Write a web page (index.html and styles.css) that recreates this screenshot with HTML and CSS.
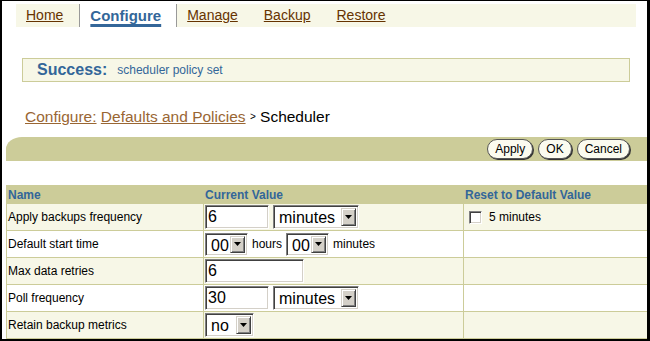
FILE: index.html
```html
<!DOCTYPE html>
<html lang="en">
<head>
  <meta charset="UTF-8" />
  <title>Scheduler</title>
  <link rel="stylesheet" href="styles.css">
</head>
<body>
  <div class="page">

    <!-- Tabs -->
    <nav class="tabs">
      <a class="tab" href="#">Home</a>
      <a class="tab tab-active" href="#">Configure</a>
      <a class="tab" href="#">Manage</a>
      <a class="tab" href="#">Backup</a>
      <a class="tab" href="#">Restore</a>
    </nav>

    <!-- Confirmation -->
    <div class="message">
      <span class="message-title">Success:</span>
      <span class="message-text">scheduler policy set</span>
    </div>

    <!-- Breadcrumbs -->
    <div class="crumbs">
      <a href="#">Configure:</a> <a href="#">Defaults and Policies</a>
      <span class="crumb-sep">&gt;</span> Scheduler
    </div>

    <!-- Action bar -->
    <div class="actions">
      <button class="btn">Apply</button>
      <button class="btn">OK</button>
      <button class="btn">Cancel</button>
    </div>

    <table class="settings">
      <colgroup>
        <col class="col-name">
        <col class="col-value">
        <col class="col-reset">
      </colgroup>
      <thead>
        <tr>
          <th>Name</th>
          <th>Current Value</th>
          <th>Reset to Default Value</th>
        </tr>
      </thead>
      <tbody>
        <tr>
          <td>Apply backups frequency</td>
          <td>
            <div class="controls">
              <input class="field field-short" type="text" value="6">
              <span class="select select-unit"><span class="select-value">minutes</span><span class="select-btn"><svg width="7" height="4" viewBox="0 0 7 4"><path d="M0 0h7L3.5 4z" fill="#000"/></svg></span></span>
            </div>
          </td>
          <td>
            <label class="reset"><input class="check" type="checkbox"> 5 minutes</label>
          </td>
        </tr>
        <tr>
          <td>Default start time</td>
          <td>
            <div class="controls">
              <span class="select select-time"><span class="select-value">00</span><span class="select-btn"><svg width="7" height="4" viewBox="0 0 7 4"><path d="M0 0h7L3.5 4z" fill="#000"/></svg></span></span>
              <span class="unit">hours</span>
              <span class="select select-time"><span class="select-value">00</span><span class="select-btn"><svg width="7" height="4" viewBox="0 0 7 4"><path d="M0 0h7L3.5 4z" fill="#000"/></svg></span></span>
              <span class="unit">minutes</span>
            </div>
          </td>
          <td></td>
        </tr>
        <tr>
          <td>Max data retries</td>
          <td>
            <div class="controls">
              <input class="field field-long" type="text" value="6">
            </div>
          </td>
          <td></td>
        </tr>
        <tr>
          <td>Poll frequency</td>
          <td>
            <div class="controls">
              <input class="field field-short" type="text" value="30">
              <span class="select select-unit"><span class="select-value">minutes</span><span class="select-btn"><svg width="7" height="4" viewBox="0 0 7 4"><path d="M0 0h7L3.5 4z" fill="#000"/></svg></span></span>
            </div>
          </td>
          <td></td>
        </tr>
        <tr>
          <td>Retain backup metrics</td>
          <td>
            <div class="controls">
              <span class="select select-bool"><span class="select-value">no</span><span class="select-btn"><svg width="7" height="4" viewBox="0 0 7 4"><path d="M0 0h7L3.5 4z" fill="#000"/></svg></span></span>
            </div>
          </td>
          <td></td>
        </tr>
      </tbody>
    </table>

  </div>
</body>
</html>
```

FILE: styles.css
```css
body {
  margin: 0;
  font-family: 'Liberation Sans', Arial, sans-serif;
  color: #000;
  background-color: #fff;
}

.page {
  width: 650px;
  height: 341px;
  box-sizing: border-box;
  border: solid #000;
  border-width: 1px 3px 2px 2px;
  overflow: hidden;
}

/* Tabs */
.tabs {
  display: flex;
  height: 23px;
  margin: 3px 11px 0 14px;
  background-color: #f7f7e7;
}

.tab {
  padding: 0 16px 0 10px;
  line-height: 23px;
  font-size: 14px;
  color: #663300;
}

.tab-active {
  padding: 0 15px 0 10px;
  background-color: #fff;
  border-left: 1px solid #999;
  border-right: 1px solid #999;
  font-size: 15px;
  font-weight: bold;
  color: #336699;
  text-decoration-thickness: 3px;
  text-underline-offset: 3px;
}

/* Success message */
.message {
  display: flex;
  align-items: center;
  gap: 10px;
  height: 24px;
  box-sizing: border-box;
  margin: 31px 17px 0 20px;
  padding-left: 14px;
  border: 1px solid #cccc99;
  background-color: #f7f7e7;
  color: #336699;
}

.message-title {
  font-size: 16px;
  font-weight: bold;
}

.message-text {
  font-size: 12px;
}

/* Breadcrumbs */
.crumbs {
  margin: 25px 0 0 23px;
  font-size: 15.5px;
  line-height: 20px;
}

.crumbs a {
  color: #996633;
}

.crumb-sep {
  font-size: 10px;
  vertical-align: 2px;
}

/* Action bar */
.actions {
  display: flex;
  justify-content: flex-end;
  align-items: center;
  gap: 5px;
  height: 24px;
  margin: 10px 0 0 4px;
  padding-right: 17px;
  background-color: #cccc99;
  border-top-left-radius: 16px 12px;
}

.btn {
  height: 20px;
  padding: 0 7px;
  font-family: 'Liberation Sans', Arial, sans-serif;
  font-size: 12px;
  color: #000;
  background-color: #fbfbef;
  border: 1px solid #555;
  border-radius: 10px;
  box-shadow: 1px 1px 0 #333;
  cursor: pointer;
}

/* Settings table */
.settings {
  width: 641px;
  margin: 24px 0 0 4px;
  border-collapse: collapse;
  table-layout: fixed;
  font-size: 12px;
}

.col-name { width: 197px; }
.col-value { width: 260px; }
.col-reset { width: 184px; }

.settings th {
  height: 17px;
  padding: 0 1px;
  text-align: left;
  color: #336699;
  background-color: #cccc99;
  border: 1px solid #cccc99;
}

.settings tbody tr {
  height: 27px;
}

.settings td {
  padding: 0 1px;
  border: 1px solid #cccc99;
  background-color: #fff;
}

.settings tbody tr:nth-child(odd) td {
  background-color: #f7f7e7;
}

.controls {
  display: flex;
  align-items: center;
  gap: 4px;
}

/* Classic form controls */
.field {
  height: 24px;
  box-sizing: border-box;
  margin: 0;
  padding: 0 2px;
  font-family: 'Liberation Sans', Arial, sans-serif;
  font-size: 16px;
  color: #000;
  background-color: #fff;
  border: 1px solid;
  border-color: #808080 #fff #fff #808080;
  box-shadow: inset 1px 1px 0 #404040, inset -1px -1px 0 #d4d0c8;
  outline: none;
}

.field-short { width: 64px; }
.field-long { width: 99px; }

.select {
  display: inline-flex;
  align-items: stretch;
  height: 24px;
  box-sizing: border-box;
  padding: 2px;
  background-color: #fff;
  border: 1px solid;
  border-color: #808080 #fff #fff #808080;
  box-shadow: inset 1px 1px 0 #404040, inset -1px -1px 0 #d4d0c8;
}

.select-value {
  flex: 1;
  padding-left: 3px;
  font-size: 16px;
  line-height: 20px;
}

.select-btn {
  display: flex;
  align-items: center;
  justify-content: center;
  width: 15px;
  box-sizing: border-box;
  background-color: #d4d0c8;
  border: 1px solid;
  border-color: #d4d0c8 #404040 #404040 #d4d0c8;
  box-shadow: inset 1px 1px 0 #fff, inset -1px -1px 0 #808080;
}

.select-unit { width: 86px; }
.select-time { width: 43px; height: 23px; }
.select-bool { width: 49px; }

.unit {
  font-size: 12px;
}

.reset {
  display: flex;
  align-items: center;
  gap: 7px;
  padding-left: 4px;
}

.check {
  appearance: none;
  width: 13px;
  height: 13px;
  margin: 0;
  background-color: #fff;
  border: 1px solid;
  border-color: #808080 #fff #fff #808080;
  box-shadow: inset 1px 1px 0 #404040, inset -1px -1px 0 #d4d0c8;
}
```
